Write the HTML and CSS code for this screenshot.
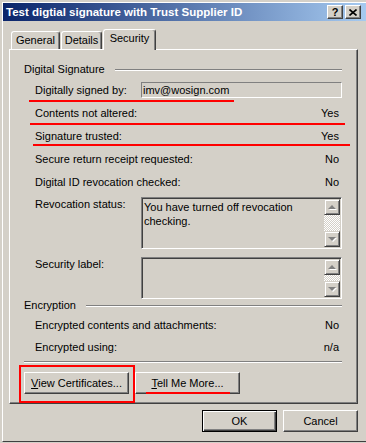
FILE: index.html
```html
<!DOCTYPE html>
<html lang="en">
<head>
  <meta charset="UTF-8">
  <meta name="viewport" content="width=device-width, initial-scale=1.0">
  <title>Message Security Properties</title>
  <link rel="stylesheet" href="styles.css">
</head>
<body>
  <div class="window">
    <div class="titlebar">
      <span class="title">Test digtial signature with Trust Supplier ID</span>
      <div class="caption-btns">
        <span class="cbtn help">?</span>
        <span class="cbtn close">
          <svg width="8" height="7" viewBox="0 0 8 7"><path d="M0.5 0.5 L7.5 6.5 M7.5 0.5 L0.5 6.5" stroke="#000" stroke-width="1.6" fill="none"/></svg>
        </span>
      </div>
    </div>

    <div class="client">
      <div class="tabs">
        <div class="tab tab-general">General</div>
        <div class="tab tab-details">Details</div>
        <div class="tab tab-security active">Security</div>
      </div>

      <div class="panel">
        <div class="group-head"><span>Digital Signature</span><span class="etched"></span></div>

        <div class="row field">
          <span class="label">Digitally signed by:</span>
          <div class="textbox">imv@wosign.com</div>
        </div>
        <div class="rows first">
          <div class="row"><span>Contents not altered:</span><span>Yes</span></div>
          <div class="row"><span>Signature trusted:</span><span>Yes</span></div>
          <div class="row"><span>Secure return receipt requested:</span><span>No</span></div>
          <div class="row"><span>Digital ID revocation checked:</span><span>No</span></div>
        </div>

        <div class="row memo-row revocation">
          <span class="label">Revocation status:</span>
          <div class="memo tall">
            <div class="memo-text">You have turned off revocation checking.</div>
            <div class="scrollbar">
              <span class="sbtn"><i class="arrow up"></i></span>
              <span class="track"></span>
              <span class="sbtn"><i class="arrow down"></i></span>
            </div>
          </div>
        </div>

        <div class="row memo-row security">
          <span class="label">Security label:</span>
          <div class="memo short">
            <div class="memo-text"></div>
            <div class="scrollbar">
              <span class="sbtn"><i class="arrow up"></i></span>
              <span class="track"></span>
              <span class="sbtn"><i class="arrow down"></i></span>
            </div>
          </div>
        </div>

        <div class="group-head enc"><span>Encryption</span><span class="etched"></span></div>
        <div class="rows second">
          <div class="row short-row"><span>Encrypted contents and attachments:</span><span>No</span></div>
          <div class="row short-row"><span>Encrypted using:</span><span>n/a</span></div>
        </div>

        <div class="separator"></div>

        <div class="panel-btns">
          <button class="btn wide"><u>V</u>iew Certificates...</button>
          <button class="btn wide"><u>T</u>ell Me More...</button>
        </div>
      </div>

      <div class="dialog-btns">
        <button class="btn default">OK</button>
        <button class="btn">Cancel</button>
      </div>
    </div>
  </div>

  <!-- red annotation marks drawn over the dialog -->
  <div class="mark line1"></div>
  <div class="mark line2"></div>
  <div class="mark line3"></div>
  <div class="mark box"></div>
  <div class="mark line4"></div>
</body>
</html>
```

FILE: styles.css
```css
* {
  box-sizing: border-box;
}
body {
  margin: 0;
  width: 366px;
  height: 443px;
  overflow: hidden;
  position: relative;
  background: #d4d0c8;
  color: #000;
  font-family: Tahoma, 'Liberation Sans', Arial, sans-serif;
  font-size: 11px;
}
.window {
  margin: 2px 0 0 2px;
  border-top: 1px solid #fff;
  border-left: 1px solid #fff;
  border-bottom: 1px solid #404040;
}
.titlebar {
  height: 18px;
  display: flex;
  align-items: center;
  justify-content: space-between;
  padding: 0 5px 0 3px;
  background: linear-gradient(to right, #0a246a, #a6caf0);
  color: #fff;
  font-weight: bold;
}
.title {
  font-size: 11.5px;
}
.caption-btns {
  display: flex;
  gap: 1px;
}
.cbtn {
  width: 16px;
  height: 14px;
  display: flex;
  align-items: center;
  justify-content: center;
  background: #d4d0c8;
  color: #000;
  font-weight: bold;
  font-size: 11px;
  border-top: 1px solid #fff;
  border-left: 1px solid #fff;
  border-right: 1px solid #404040;
  border-bottom: 1px solid #404040;
  box-shadow: inset -1px -1px #808080;
}
.cbtn.close {
  margin-left: 1px;
}
.client {
  padding: 8px 8px 9px 6px;
}
.tabs {
  display: flex;
  align-items: flex-end;
  padding-left: 2px;
  height: 20px;
}
.tab {
  height: 18px;
  line-height: 16px;
  text-align: center;
  border-top: 1px solid #fff;
  border-left: 1px solid #fff;
  border-right: 1px solid #404040;
  border-radius: 3px 3px 0 0;
  box-shadow: inset -1px 0 #808080;
  background: #d4d0c8;
}
.tab-general {
  width: 49px;
}
.tab-details {
  width: 41px;
  margin-left: 1px;
}
.tab-security {
  width: 53px;
  margin-left: 1px;
}
.tab.active {
  height: 21px;
  line-height: 17px;
  margin-bottom: -1px;
  position: relative;
  z-index: 1;
}
.panel {
  border-top: 1px solid #fff;
  border-left: 1px solid #fff;
  border-right: 1px solid #404040;
  border-bottom: 1px solid #404040;
  box-shadow: inset -1px -1px #808080;
  padding: 13px 15px 9px 14px;
}
.group-head {
  display: flex;
  align-items: center;
  height: 13px;
  line-height: 13px;
}
.etched {
  flex: 1;
  height: 2px;
  margin-left: 10px;
  border-top: 1px solid #808080;
  border-bottom: 1px solid #fff;
}
.row {
  display: flex;
  justify-content: space-between;
  align-items: center;
  padding: 0 3px 0 11px;
  height: 23px;
}
.row .label {
  width: 106px;
  flex: none;
}
.row.field {
  margin-top: 6px;
  height: 16px;
  padding-right: 0;
}
.textbox {
  flex: 1;
  height: 16px;
  line-height: 14px;
  padding-left: 1px;
  border-top: 1px solid #808080;
  border-left: 1px solid #808080;
  border-right: 1px solid #fff;
  border-bottom: 1px solid #fff;
}
.rows.first {
  margin-top: 3px;
}
.memo-row {
  align-items: flex-start;
  padding-right: 0;
  height: auto;
  line-height: 13px;
}
.memo-row .label {
  padding-top: 1px;
}
.revocation {
  margin-top: 4px;
}
.security {
  margin-top: 8px;
}
.memo {
  flex: 1;
  display: flex;
  border-top: 1px solid #808080;
  border-left: 1px solid #808080;
  border-right: 1px solid #fff;
  border-bottom: 1px solid #fff;
  box-shadow: inset 1px 1px #404040, inset -1px -1px #d4d0c8;
  padding: 1px;
}
.memo.tall {
  height: 52px;
}
.memo.short {
  height: 42px;
}
.memo-text {
  flex: 1;
  padding: 1px 2px 0 1px;
  line-height: 14px;
}
.scrollbar {
  width: 16px;
  display: flex;
  flex-direction: column;
}
.sbtn {
  width: 16px;
  height: 16px;
  flex: none;
  display: flex;
  align-items: center;
  justify-content: center;
  border-top: 1px solid #d4d0c8;
  border-left: 1px solid #d4d0c8;
  border-right: 1px solid #404040;
  border-bottom: 1px solid #404040;
  box-shadow: inset 1px 1px #fff, inset -1px -1px #808080;
  background: #d4d0c8;
}
.track {
  flex: 1;
  background: repeating-conic-gradient(#fff 0 25%, #d4d0c8 0 50%) 0 0 / 2px 2px;
}
.arrow {
  width: 0;
  height: 0;
  border-left: 4px solid transparent;
  border-right: 4px solid transparent;
  filter: drop-shadow(1px 1px 0 #fff);
}
.arrow.up {
  border-bottom: 4px solid #808080;
}
.arrow.down {
  border-top: 4px solid #808080;
}
.rows.second {
  margin-top: 2px;
}
.row.short-row {
  height: 22px;
}
.separator {
  margin-top: 3px;
  height: 2px;
  border-top: 1px solid #808080;
  border-bottom: 1px solid #fff;
}
.panel-btns {
  display: flex;
  gap: 6px;
  margin-top: 9px;
}
.btn {
  height: 22px;
  width: 75px;
  padding: 0;
  font-family: inherit;
  font-size: 11px;
  color: #000;
  background: #d4d0c8;
  border-top: 1px solid #fff;
  border-left: 1px solid #fff;
  border-right: 1px solid #404040;
  border-bottom: 1px solid #404040;
  box-shadow: inset -1px -1px #808080;
  border-radius: 0;
}
.btn.wide {
  width: 105px;
}
.btn.default {
  border: 1px solid #000;
  box-shadow: inset 1px 1px #fff, inset -1px -1px #404040, inset -2px -2px #808080;
}
.dialog-btns {
  display: flex;
  justify-content: flex-end;
  gap: 6px;
  margin-top: 6px;
}
.mark {
  position: absolute;
  background: #ff0000;
  height: 2px;
}
.line1 {
  left: 29px;
  top: 100px;
  width: 205px;
}
.line2 {
  left: 30px;
  top: 123px;
  width: 315px;
}
.line3 {
  left: 33px;
  top: 144px;
  width: 317px;
}
.line4 {
  left: 146px;
  top: 392px;
  width: 84px;
}
.mark.box {
  left: 19px;
  top: 365px;
  width: 116px;
  height: 38px;
  background: none;
  border: 2px solid #ff0000;
}
```
